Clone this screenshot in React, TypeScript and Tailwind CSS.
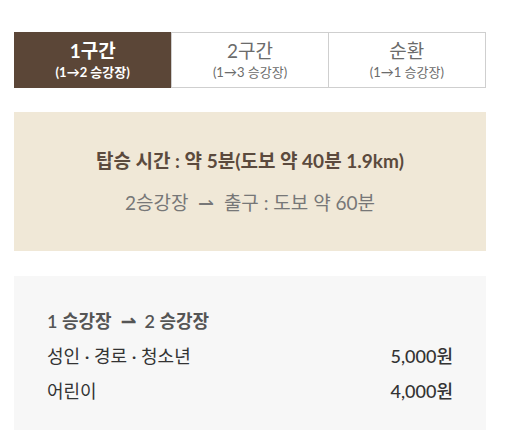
import React from 'react'

const tabs = [
  { title: '1구간', sub: '(1→2 승강장)', active: true },
  { title: '2구간', sub: '(1→3 승강장)', active: false },
  { title: '순환', sub: '(1→1 승강장)', active: false },
]

const fares = [
  { label: '성인 · 경로 · 청소년', price: '5,000원' },
  { label: '어린이', price: '4,000원' },
]

const App: React.FC = () => {
  return (
    <div className="w-[531px] h-[430px] bg-white px-[14px] pt-[32px] text-[#444] font-['Lato','Noto_Sans_CJK_KR',sans-serif] overflow-hidden">
      <div className="grid grid-cols-3 w-[472px] h-[56px]">
        {tabs.map((t, i) => (
          <div
            key={t.title}
            className={
              t.active
                ? 'flex flex-col items-center justify-center bg-[#5b4637] text-white'
                : 'flex flex-col items-center justify-center border border-[#cfcfcf] text-[#6b6b6b] ' +
                  (i === 2 ? 'border-l-0' : '')
            }
          >
            <div className={t.active ? 'text-[19px] leading-[24px] font-bold' : 'text-[19px] leading-[24px]'}>
              {t.title}
            </div>
            <div className={t.active ? 'text-[13px] leading-[18px] font-bold' : 'text-[13px] leading-[18px]'}>
              {t.sub}
            </div>
          </div>
        ))}
      </div>

      <div className="mt-[24px] w-[472px] h-[139px] bg-[#f0e8d7] flex flex-col items-center justify-center gap-[16px]">
        <div className="text-[19px] leading-[26px] font-bold text-[#5b4a3d]">
          탑승 시간 : 약 5분(도보 약 40분 1.9km)
        </div>
        <div className="text-[19px] leading-[26px] text-[#777]">
          2승강장 &nbsp;⇀&nbsp; 출구 : 도보 약 60분
        </div>
      </div>

      <div className="mt-[25px] w-[472px] h-[160px] bg-[#f7f7f7] px-[33px] pt-[32px]">
        <div className="text-[18px] leading-[26px] font-semibold text-[#555]">1 승강장 &nbsp;⇀&nbsp; 2 승강장</div>
        {fares.map((f) => (
          <div key={f.label} className="flex justify-between mt-[9px] text-[18px] leading-[26px] text-[#333]">
            <span>{f.label}</span>
            <span className="font-medium">{f.price}</span>
          </div>
        ))}
      </div>
    </div>
  )
}

export default App
